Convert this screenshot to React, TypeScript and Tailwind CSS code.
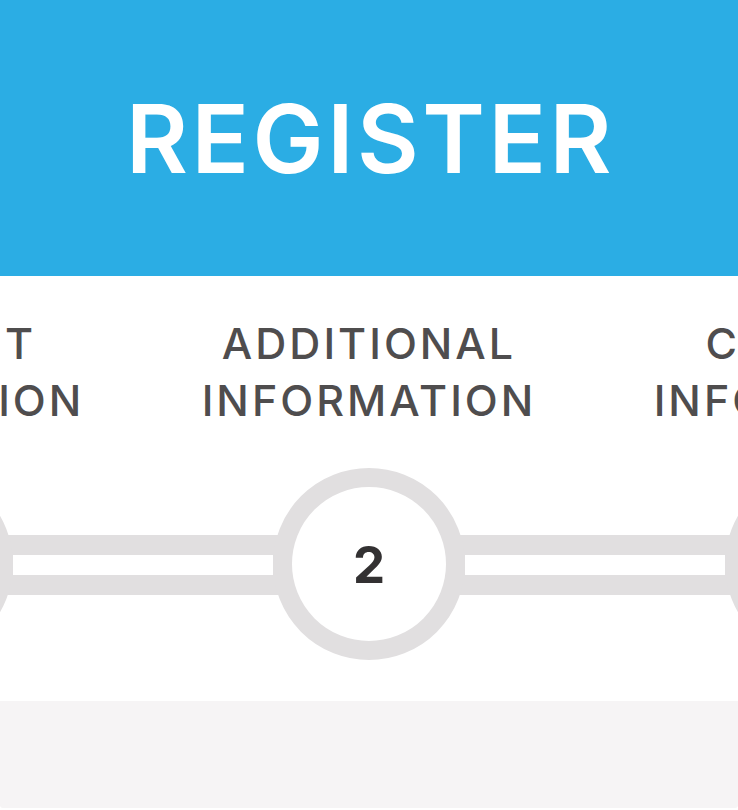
const steps = [
    { n: 1, top: "ACCOUNT", bottom: "INFORMATION" },
    { n: 2, top: "ADDITIONAL", bottom: "INFORMATION" },
    { n: 3, top: "CONTACT", bottom: "INFORMATION" },
];

const font = { fontFamily: "Inter, 'Noto Sans', sans-serif" };

const StepCircle = ({ n }: { n: number }) => (
    <div className="relative z-10 flex h-[192px] w-[192px] shrink-0 items-center justify-center rounded-full border-[19px] border-[#e1dfe0] bg-white">
        <span className="text-[51px] font-bold leading-none text-[#333132]">{n}</span>
    </div>
);

const Connector = () => (
    <div className="-mx-[20px] mt-[2px] h-[60px] w-[300px] shrink-0 border-[20px] border-[#e1dfe0] bg-white" />
);

export default function App() {
    return (
        <div className="min-h-[810px] w-full overflow-hidden bg-white" style={font}>
            <header className="flex h-[276px] items-center justify-center bg-[#2badE4]">
                <h1 className="pl-[3px] text-[95px] font-semibold leading-none tracking-[3.5px] text-white">
                    REGISTER
                </h1>
            </header>

            <div className="flex justify-center overflow-hidden pt-[39px]">
                {steps.map((s) => (
                    <div
                        key={s.n}
                        className="flex w-[452px] shrink-0 flex-col items-center text-[43px] font-medium leading-[57px] tracking-[3px] text-[#4f4d4e]"
                    >
                        <span className="whitespace-nowrap">{s.top}</span>
                        <span className="whitespace-nowrap">{s.bottom}</span>
                    </div>
                ))}
            </div>

            <div className="flex items-center justify-center overflow-hidden pt-[39px]">
                <StepCircle n={1} />
                <Connector />
                <StepCircle n={2} />
                <Connector />
                <StepCircle n={3} />
            </div>

            <div className="mt-[41px] h-[107px] rounded-b-[3px] bg-[#f6f4f5]" />
        </div>
    );
}
